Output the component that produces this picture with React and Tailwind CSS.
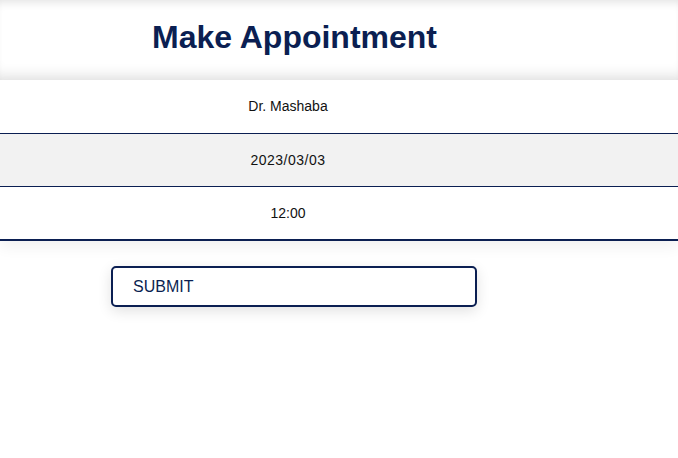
export default function App() {
  const rows = [
    { label: 'Dr. Mashaba', cls: 'bg-white h-[54px] border-b', text: '' },
    { label: '2023/03/03', cls: 'bg-[#f2f2f2] h-[53px] border-b', text: 'tracking-[0.5px]' },
    { label: '12:00', cls: 'bg-white h-[54px] border-b-2', text: '' },
  ];

  return (
    <div className="min-h-[458px] w-[678px] bg-white font-['Liberation_Sans',Arial,sans-serif]">
      <header className="h-20 flex items-center shadow-[inset_0_8px_10px_-6px_rgba(0,0,0,0.12),inset_0_-14px_14px_-10px_rgba(0,0,0,0.12)]">
        <h1 className="w-[589px] text-center text-[32px] font-bold text-[#0b1f52] leading-none pb-[7px]">
          Make Appointment
        </h1>
      </header>

      <div className="shadow-[0_6px_14px_rgba(0,0,0,0.06)]">
        {rows.map((row) => (
          <div key={row.label} className={`${row.cls} flex items-center border-[#0b1f52]`}>
            <span className={`w-[576px] text-center text-[14px] text-[#111] ${row.text}`}>{row.label}</span>
          </div>
        ))}
      </div>

      <div className="pt-[25px] pl-[111px]">
        <button
          type="button"
          className="w-[366px] h-[41px] text-left pl-[20px] border-2 border-[#0b1f52] rounded-[5px] bg-white text-[16px] text-[#0b1f52] shadow-[0_4px_14px_rgba(0,0,0,0.12)]"
        >
          SUBMIT
        </button>
      </div>
    </div>
  );
}
